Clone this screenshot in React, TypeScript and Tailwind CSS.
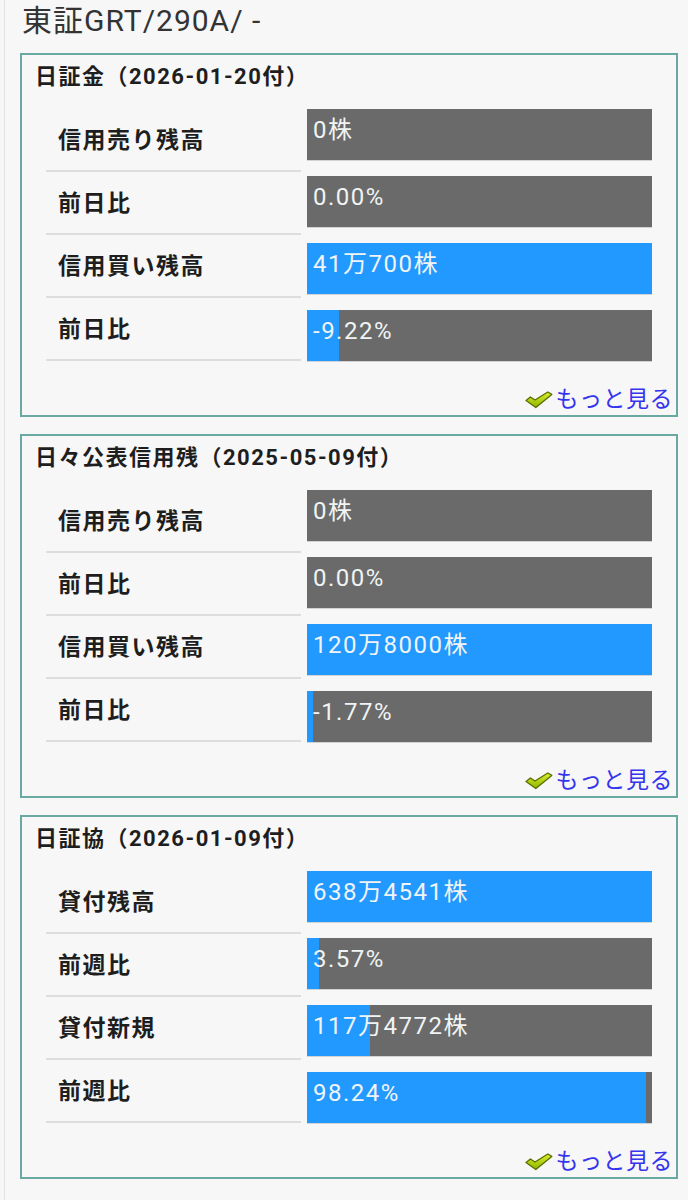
import React from 'react';

type Row = {
  label: string;
  value: string;
  // 0-100, how much of the bar is blue
  fill: number;
};

type Section = {
  title: string;
  rows: Row[];
};

const sections: Section[] = [
  {
    title: '日証金（2026-01-20付）',
    rows: [
      { label: '信用売り残高', value: '0株', fill: 0 },
      { label: '前日比', value: '0.00%', fill: 0 },
      { label: '信用買い残高', value: '41万700株', fill: 100 },
      { label: '前日比', value: '-9.22%', fill: 9.22 },
    ],
  },
  {
    title: '日々公表信用残（2025-05-09付）',
    rows: [
      { label: '信用売り残高', value: '0株', fill: 0 },
      { label: '前日比', value: '0.00%', fill: 0 },
      { label: '信用買い残高', value: '120万8000株', fill: 100 },
      { label: '前日比', value: '-1.77%', fill: 1.77 },
    ],
  },
  {
    title: '日証協（2026-01-09付）',
    rows: [
      { label: '貸付残高', value: '638万4541株', fill: 100 },
      { label: '前週比', value: '3.57%', fill: 3.57 },
      { label: '貸付新規', value: '117万4772株', fill: 18.4 },
      { label: '前週比', value: '98.24%', fill: 98.24 },
    ],
  },
];

function CheckIcon() {
  return (
    <svg width="28" height="18" viewBox="0 0 28 18" className="shrink-0">
      <defs>
        <linearGradient id="chk" x1="0" y1="0" x2="0" y2="1">
          <stop offset="0" stopColor="#dcf02c" />
          <stop offset="1" stopColor="#8cb400" />
        </linearGradient>
      </defs>
      <path
        d="M1 9.4 L5.4 6 L10 9 L22.8 1 L26.8 3.4 L10.8 16.6 Z"
        fill="url(#chk)"
        stroke="#5a6e00"
        strokeWidth="1.3"
        strokeLinejoin="round"
      />
    </svg>
  );
}

function Bar({ value, fill }: { value: string; fill: number }) {
  return (
    <div className="relative h-[52px] bg-[#6a6a6a] border-b border-[#d2d2d2]">
      <div className="absolute inset-y-0 left-0 bg-[#2299ff]" style={{ width: `${fill}%` }} />
      <div className="relative px-[6px] text-[24px] leading-[42px] tracking-[1.5px] text-[#f0f4f4]">
        {value}
      </div>
    </div>
  );
}

function InfoBox({ section }: { section: Section }) {
  return (
    <div className="mb-[17px] border-2 border-[#6aa9a2]">
      <div className="pl-[13px] pt-[7px] pb-[17px] text-[22px] font-bold leading-[30px] tracking-[1.5px] text-[#1e1e1e]">
        {section.title}
      </div>
      <div className="flex pl-[24px] pr-[24px] gap-[6px]">
        <div className="w-[255px] shrink-0">
          {section.rows.map((r, i) => (
            <div
              key={i}
              className="flex h-[63px] items-center border-b-2 border-[#dddddd] pl-[12px] pt-[4px] text-[23px] font-bold tracking-[1.5px] text-[#1e1e1e]"
            >
              {r.label}
            </div>
          ))}
        </div>
        <div className="flex flex-1 flex-col gap-[15px]">
          {section.rows.map((r, i) => (
            <Bar key={i} value={r.value} fill={r.fill} />
          ))}
        </div>
      </div>
      <div className="mt-[23px] flex items-center justify-end gap-[3px] pr-[3px] leading-[30px]">
        <CheckIcon />
        <a className="text-[23px] tracking-[0.5px] text-[#3535ee]">もっと見る</a>
      </div>
    </div>
  );
}

export default function App() {
  return (
    <div
      className="min-h-screen bg-[#f7f7f7]"
      style={{ fontFamily: 'Roboto, "Noto Sans CJK JP", sans-serif' }}
    >
      <div className="ml-[4px] min-h-screen border-l border-[#e3e3e3] pl-[15px] pr-[10px]">
        <h1 className="pl-[2px] pt-[1px] pb-[12px] text-[30px] leading-[40px] tracking-[1px] text-[#333333]">
          東証GRT/290A/ -
        </h1>
        {sections.map((s, i) => (
          <InfoBox key={i} section={s} />
        ))}
      </div>
    </div>
  );
}
